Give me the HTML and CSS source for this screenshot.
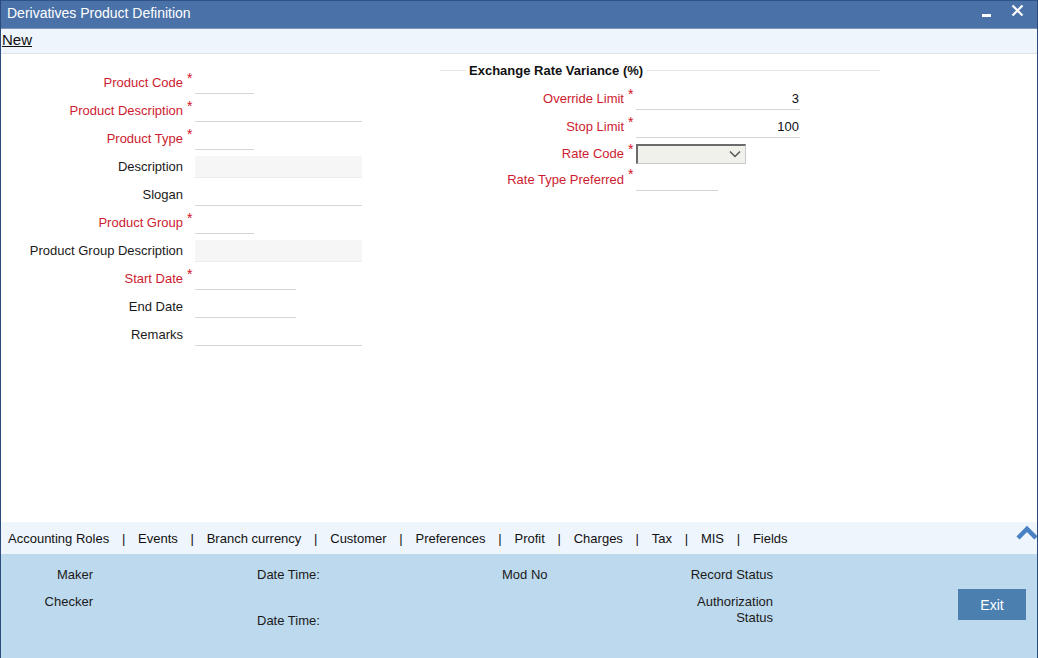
FILE: index.html
```html
<!DOCTYPE html>
<html>
<head>
<meta charset="utf-8">
<link rel="stylesheet" href="styles.css">
</head>
<body>
<div class="window">
  <div class="titlebar">
    <span class="title">Derivatives Product Definition</span>
    <span class="win-btns">
      <svg class="ico-min" width="10" height="4" viewBox="0 0 10 4"><rect x="0" y="0" width="9" height="3" fill="#fff"/></svg>
      <svg class="ico-close" width="13" height="13" viewBox="0 0 13 13"><path d="M1.5 1.5 L11.5 11.5 M11.5 1.5 L1.5 11.5" stroke="#fff" stroke-width="2.2"/></svg>
    </span>
  </div>
  <div class="toolbar"><span class="new">New</span></div>
  <div class="main">
    <div class="col-left">
      <div class="row"><label class="lbl req">Product Code</label><span class="star">*</span><input class="fld w-s" type="text"></div>
      <div class="row"><label class="lbl req">Product Description</label><span class="star">*</span><input class="fld w-l" type="text"></div>
      <div class="row"><label class="lbl req">Product Type</label><span class="star">*</span><input class="fld w-s" type="text"></div>
      <div class="row"><label class="lbl">Description</label><span class="star"></span><input class="fld w-l ro" type="text" readonly></div>
      <div class="row"><label class="lbl">Slogan</label><span class="star"></span><input class="fld w-l" type="text"></div>
      <div class="row"><label class="lbl req">Product Group</label><span class="star">*</span><input class="fld w-s" type="text"></div>
      <div class="row"><label class="lbl">Product Group Description</label><span class="star"></span><input class="fld w-l ro" type="text" readonly></div>
      <div class="row"><label class="lbl req">Start Date</label><span class="star">*</span><input class="fld w-m" type="text"></div>
      <div class="row"><label class="lbl">End Date</label><span class="star"></span><input class="fld w-m" type="text"></div>
      <div class="row"><label class="lbl">Remarks</label><span class="star"></span><input class="fld w-l" type="text"></div>
    </div>
    <div class="col-right">
      <div class="legend"><span class="lg-line lg-short"></span><span class="lg-text">Exchange Rate Variance (%)</span><span class="lg-line lg-fill"></span></div>
      <div class="rows-right">
        <div class="row"><label class="lbl req">Override Limit</label><span class="star">*</span><input class="fld w-r num" type="text" value="3"></div>
        <div class="row"><label class="lbl req">Stop Limit</label><span class="star">*</span><input class="fld w-r num" type="text" value="100"></div>
        <div class="row row-sel"><label class="lbl req">Rate Code</label><span class="star">*</span>
          <div class="select"><svg class="chev" width="12" height="8" viewBox="0 0 12 8"><path d="M1 1.5 L6 6.5 L11 1.5" fill="none" stroke="#555" stroke-width="1.5"/></svg></div>
        </div>
        <div class="row row-rt"><label class="lbl req">Rate Type Preferred</label><span class="star">*</span><input class="fld w-rt" type="text"></div>
      </div>
    </div>
  </div>
  <div class="tabs">
    <span class="tab">Accounting Roles</span><span class="sep">|</span>
    <span class="tab">Events</span><span class="sep">|</span>
    <span class="tab">Branch currency</span><span class="sep">|</span>
    <span class="tab">Customer</span><span class="sep">|</span>
    <span class="tab">Preferences</span><span class="sep">|</span>
    <span class="tab">Profit</span><span class="sep">|</span>
    <span class="tab">Charges</span><span class="sep">|</span>
    <span class="tab">Tax</span><span class="sep">|</span>
    <span class="tab">MIS</span><span class="sep">|</span>
    <span class="tab">Fields</span>
    <svg class="up" width="24" height="16" viewBox="0 0 24 16"><path d="M2 13 L11 4 L20 13" fill="none" stroke="#4a80c4" stroke-width="4.5"/></svg>
  </div>
  <div class="footer">
    <div class="fc fc1"><div>Maker</div><div class="checker">Checker</div></div>
    <div class="fc fc2"><div>Date Time:</div><div class="dt2">Date Time:</div></div>
    <div class="fc fc3"><div>Mod No</div></div>
    <div class="fc fc4"><div>Record Status</div><div class="auth">Authorization<br>Status</div></div>
    <div class="fc fc5"><button class="exit">Exit</button></div>
  </div>
</div>
</body>
</html>
```
FILE: styles.css
```css
* { box-sizing: border-box; }
html, body { margin: 0; padding: 0; }
body {
  font-family: "Liberation Sans", Arial, sans-serif;
  font-size: 13px;
  color: #1a1a1a;
  background: #fff;
}
.window {
  width: 1038px;
  height: 658px;
  border-left: 1px solid #2b4b7f;
  border-right: 1px solid #2b4b7f;
  display: flex;
  flex-direction: column;
  overflow: hidden;
}
.titlebar {
  height: 29px;
  flex: none;
  background: #4a72a8;
  border-top: 1px solid #2f5287;
  border-bottom: 1px solid #7f98b8;
  display: flex;
  align-items: center;
  justify-content: space-between;
  padding-left: 6px;
  padding-right: 13px;
}
.title {
  color: #fff;
  font-size: 14px;
  position: relative;
  top: -2px;
}
.win-btns {
  display: flex;
  align-items: center;
  gap: 19px;
}
.ico-min { position: relative; top: 1px; }
.ico-close { position: relative; top: -4px; }
.toolbar {
  height: 25px;
  flex: none;
  background: #eef5fd;
  border-bottom: 1px solid #dfe3e8;
  padding-left: 1px;
  padding-bottom: 4px;
  display: flex;
  align-items: center;
}
.new {
  font-size: 15px;
  text-decoration: underline;
  color: #111;
}
.main {
  flex: 1;
  display: flex;
  background: #fff;
}
.col-left {
  width: 439px;
  padding-top: 14px;
}
.row {
  display: flex;
  align-items: center;
  height: 28px;
}
.lbl {
  width: 182px;
  text-align: right;
  color: #1a1a1a;
}
.col-right .lbl { width: 184px; }
.lbl.req { color: #cd1b30; }
.star {
  width: 12px;
  padding-left: 4px;
  color: #d4101f;
  font-size: 14px;
  align-self: flex-start;
  margin-top: 5px;
  line-height: 10px;
}
.fld {
  height: 22px;
  border: none;
  border-bottom: 1px solid #d5d5d5;
  padding: 0 1px;
  font-family: inherit;
  font-size: 13px;
  background: #fff;
  outline: none;
  margin-top: 1px;
}
.fld.ro {
  background: #f6f6f6;
  border-bottom: 1px solid #ececec;
}
.w-s { width: 59px; }
.w-m { width: 101px; }
.w-l { width: 167px; }
.w-r { width: 164px; }
.w-rt { width: 82px; }
.num { text-align: right; color: #111; }
.col-right {
  width: 440px;
  padding-top: 8px;
}
.legend {
  display: flex;
  align-items: center;
  height: 16px;
}
.lg-line {
  height: 1px;
  background: #e6e6e6;
}
.lg-short { width: 26px; margin-right: 3px; }
.lg-fill { flex: 1; margin-left: 4px; }
.lg-text {
  font-weight: bold;
  color: #111;
}
.rows-right { margin-top: 6px; }
.row-sel { height: 26px; }
.row-rt { height: 26px; }
.row-rt .star { margin-top: 3px; }
.row-sel .star { margin-top: 4px; }
.select {
  width: 110px;
  height: 20px;
  background: #f1f1ec;
  border-top: 2px solid #6b6b6b;
  border-left: 2px solid #6b6b6b;
  border-right: 1px solid #c9c9c9;
  border-bottom: 1px solid #c9c9c9;
  display: flex;
  align-items: center;
  justify-content: flex-end;
  padding-right: 4px;
  margin-top: 1px;
}
.tabs {
  height: 32px;
  flex: none;
  background: #eef5fd;
  display: flex;
  align-items: center;
  padding-left: 7px;
  padding-top: 1px;
  position: relative;
}
.tab { color: #111; }
.sep { margin: 0 12.75px; color: #111; }
.sep:first-of-type { margin-left: 13.75px; }
.up {
  position: absolute;
  right: -3px;
  top: 3px;
}
.footer {
  height: 104px;
  flex: none;
  background: #bdd9ed;
  display: flex;
  padding-top: 13px;
  line-height: 16px;
  color: #1a1a1a;
}
.fc1 { width: 92px; text-align: right; }
.checker { margin-top: 11px; }
.fc2 { width: 245px; margin-left: 164px; }
.dt2 { margin-top: 30px; }
.fc3 { width: 171px; }
.fc4 { width: 100px; text-align: right; }
.auth { margin-top: 11px; }
.fc5 { margin-left: 185px; padding-top: 22px; }
.exit {
  width: 68px;
  height: 31px;
  border: none;
  background: #4a7fb0;
  color: #fff;
  font-family: inherit;
  font-size: 14px;
  padding: 0;
}
```
